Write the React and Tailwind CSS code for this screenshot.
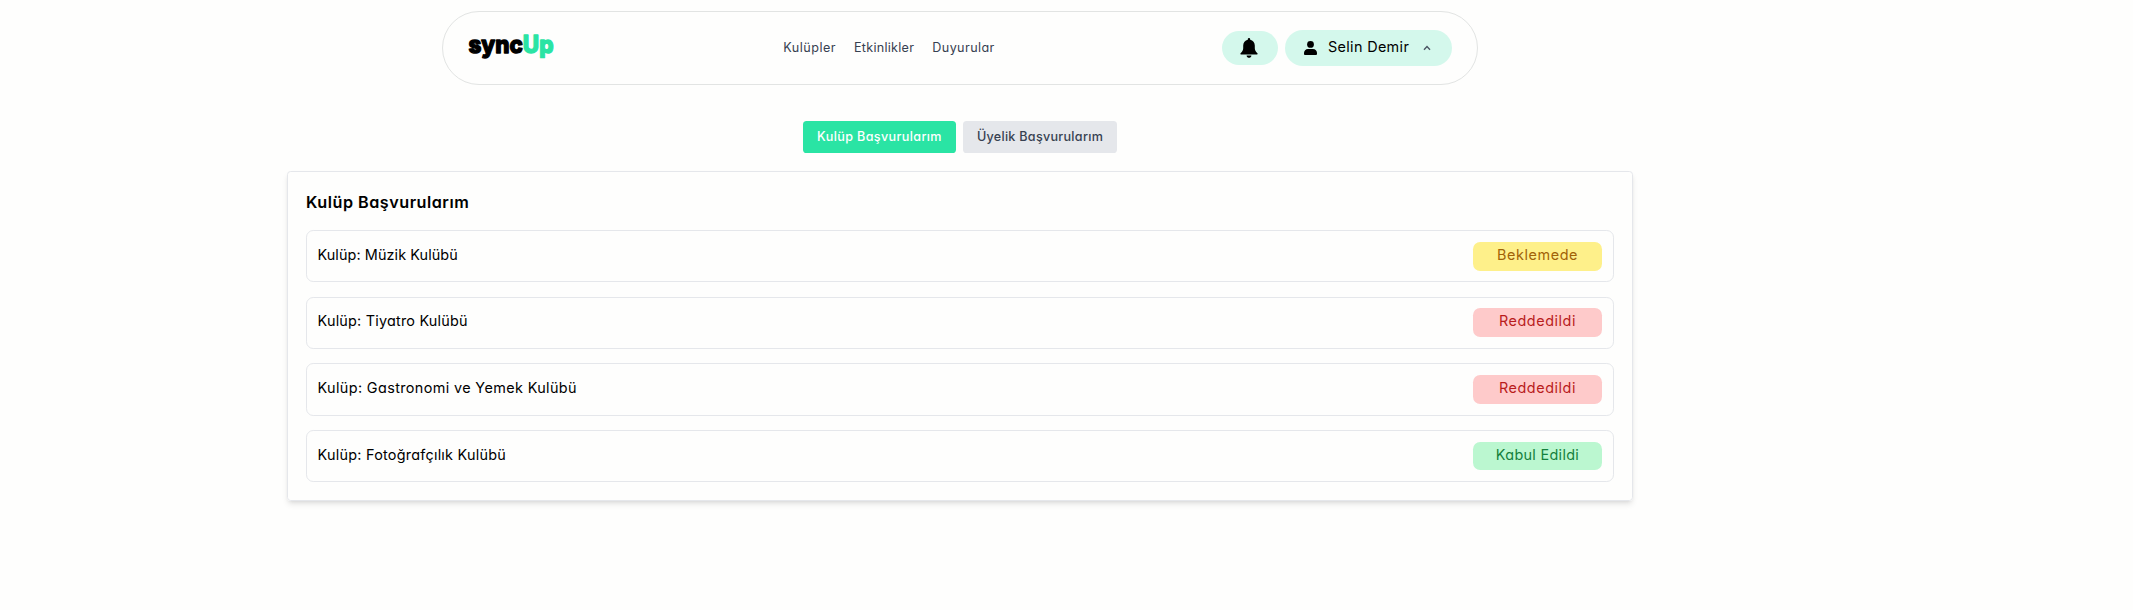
import React from "react";

const links = [
  { label: "Kulüpler", cls: "tracking-[0.5px]" },
  { label: "Etkinlikler", cls: "tracking-[0.27px]" },
  { label: "Duyurular", cls: "tracking-[0.42px]" },
];

const statusStyles = {
  Beklemede: "bg-[#fef08a] text-[#a16207] tracking-[0.6px]",
  Reddedildi: "bg-[#fecaca] text-[#b91c1c] tracking-[0.55px]",
  "Kabul Edildi": "bg-[#bbf7d0] text-[#15803d] tracking-[0.32px]",
};

const applications = [
  { club: "Müzik Kulübü", status: "Beklemede", cls: "tracking-[0.09px]" },
  { club: "Tiyatro Kulübü", status: "Reddedildi", cls: "tracking-[0.22px]" },
  { club: "Gastronomi ve Yemek Kulübü", status: "Reddedildi", cls: "tracking-[0.38px]" },
  { club: "Fotoğrafçılık Kulübü", status: "Kabul Edildi", cls: "tracking-[0.25px]" },
];

function Logo() {
  return (
    <svg width="88" height="34" viewBox="0 0 88 34" className="font-['Inter',sans-serif] text-[24px] font-extrabold [font-feature-settings:'cv11']" strokeWidth="1.3" strokeLinejoin="round">
      <text x="0.5" y="21.8" textLength="85" lengthAdjust="spacingAndGlyphs">
        <tspan fill="#000" stroke="#000">sync</tspan>
        <tspan fill="#2ae4a4" stroke="#2ae4a4">Up</tspan>
      </text>
    </svg>
  );
}

function Bell() {
  return (
    <svg width="18" height="20" viewBox="0 0 18 20" fill="currentColor" className="mr-[2px] mb-px">
      <path d="M9 0c.7 0 1.200.6 1.200 1.300v.4c2.700.6 4.600 3 4.600 5.900v2.600c0 1.900.9 3.400 2.400 4.700.8.7.4 1.600-.6 1.600H1.400c-1 0-1.400-.9-.6-1.600C2.300 13.600 3.200 12.100 3.200 10.200V7.600c0-2.900 1.900-5.300 4.600-5.900v-.4C7.800.6 8.300 0 9 0Z" />
      <path d="M6.600 17.600h4.800c0 1.300-1.100 2.300-2.400 2.300s-2.400-1-2.400-2.300Z" />
    </svg>
  );
}

function Person() {
  return (
    <svg width="13" height="14" viewBox="0 0 13 14" fill="currentColor">
      <circle cx="6.5" cy="3.4" r="3.4" />
      <path d="M4 8h5c2.300 0 4 1.800 4 4v1.100c0 .5-.4.9-.9.900H.9c-.5 0-.9-.4-.9-.9V12c0-2.200 1.700-4 4-4Z" />
    </svg>
  );
}

function Header() {
  return (
    <header className="mx-auto flex h-[74px] w-[1036px] items-center justify-between rounded-full border border-[#e2e4e3] px-[25px]">
      <Logo />
      <nav className="flex gap-[18px] pr-px pl-px text-[12.6px] text-[#374151]">
        {links.map((l) => (
          <a key={l.label} className={l.cls}>{l.label}</a>
        ))}
      </nav>
      <div className="flex w-[230px] items-center justify-end gap-[7px]">
        <button className="flex h-[34px] w-14 items-center justify-center rounded-full bg-[#d4f8ec]">
          <Bell />
        </button>
        <button className="flex h-9 w-[167px] items-center rounded-full bg-[#d4f8ec] pl-[19px] text-[14.4px]">
          <Person />
          <span className="ml-[11px] pb-[2px] tracking-[0.34px]">Selin Demir</span>
          <svg width="8" height="6" viewBox="0 0 8 6" className="ml-[14px]" fill="none" stroke="#4b5563" strokeWidth="1.4">
            <path d="M1 4.800 4 1.600 7 4.800" />
          </svg>
        </button>
      </div>
    </header>
  );
}

export default function App() {
  return (
    <div className="min-h-screen bg-[#fefefd] font-['Inter',sans-serif] text-black [font-feature-settings:'cv11']">
      <div className="w-[1920px] pt-[11px]">
        <Header />
        <div className="mt-9 flex justify-center gap-[7px] text-[12.6px] font-medium">
          <button className="h-8 w-[153px] rounded-[3.6px] bg-[#2ae4a4] tracking-[0.37px] text-white">Kulüp Başvurularım</button>
          <button className="h-8 w-[154px] rounded-[3.6px] bg-[#e5e7eb] tracking-[0.28px] text-[#374151]">Üyelik Başvurularım</button>
        </div>
        <main className="mx-auto mt-[18px] h-[330px] w-[1346px] rounded-[3.6px] border border-[#e5e7eb] px-[18px] pt-[17px] shadow-[0_4px_6px_-1px_rgba(0,0,0,0.1),0_2px_4px_-2px_rgba(0,0,0,0.1)]">
          <h2 className="h-[41px] text-[16.2px] leading-[27px] font-semibold tracking-[0.5px]">Kulüp Başvurularım</h2>
          <ul className="flex flex-col gap-[14.2px]">
            {applications.map((a) => (
              <li key={a.club} className="flex h-[52.4px] items-center justify-between rounded-[7.2px] border border-[#e5e7eb] pr-[11px] pl-[10.5px] text-[14.4px]">
                <span className={`pb-[3px] ${a.cls}`}>Kulüp: {a.club}</span>
                <span className={`h-[28.8px] w-[129px] rounded-[7.2px] text-center leading-[25.5px] ${statusStyles[a.status]}`}>{a.status}</span>
              </li>
            ))}
          </ul>
        </main>
      </div>
    </div>
  );
}
